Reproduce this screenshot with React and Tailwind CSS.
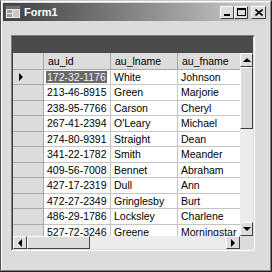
import React from "react";

const rows = [
  ["172-32-1176", "White", "Johnson"],
  ["213-46-8915", "Green", "Marjorie"],
  ["238-95-7766", "Carson", "Cheryl"],
  ["267-41-2394", "O'Leary", "Michael"],
  ["274-80-9391", "Straight", "Dean"],
  ["341-22-1782", "Smith", "Meander"],
  ["409-56-7008", "Bennet", "Abraham"],
  ["427-17-2319", "Dull", "Ann"],
  ["472-27-2349", "Gringlesby", "Burt"],
  ["486-29-1786", "Locksley", "Charlene"],
  ["527-72-3246", "Greene", "Morningstar"],
];

function Bevel({ className = "", children }) {
  return (
    <div
      className={
        "bg-[#dcdcdc] border border-t-white border-l-white border-r-[#404040] border-b-[#404040] flex items-center justify-center " +
        className
      }
    >
      {children}
    </div>
  );
}

function Arrow({ dir }) {
  const pts = {
    up: "0,4 4,0 8,4",
    down: "0,0 8,0 4,4",
    left: "4,0 4,8 0,4",
    right: "0,0 0,8 4,4",
  }[dir];
  const vert = dir === "up" || dir === "down";
  return (
    <svg width={vert ? 8 : 4} height={vert ? 4 : 8} viewBox={vert ? "0 0 8 4" : "0 0 4 8"}>
      <polygon points={pts} fill="#000" />
    </svg>
  );
}

function FormIcon() {
  return (
    <svg width="16" height="16" viewBox="0 0 16 16">
      <rect x="0.5" y="1.5" width="15" height="13" fill="#e8e8e8" stroke="#505050" />
      <rect x="1" y="2" width="14" height="3" fill="#707070" />
      <rect x="2" y="6" width="5" height="3" fill="#a0a0a0" />
      <rect x="2" y="10" width="5" height="3" fill="#a0a0a0" />
      <rect x="8" y="6" width="6" height="7" fill="#c8c8c8" />
    </svg>
  );
}

export default function App() {
  return (
    <div
      className="w-[272px] h-[272px] bg-[#dcdcdc] border border-t-[#c8c8c8] border-l-[#505050] border-r-[#202020] border-b-[#202020]"
      style={{ fontFamily: '"Liberation Sans", Arial, sans-serif' }}
    >
      <div className="h-full border border-t-white border-l-white border-r-[#808080] border-b-[#808080] p-[1px] flex flex-col">
        {/* title bar */}
        <div className="h-[18px] flex items-center bg-gradient-to-r from-[#404040] to-[#d4d4d4] pl-[2px] pr-[3px]">
          <FormIcon />
          <span className="ml-[3px] text-[11px] font-bold text-white leading-none">Form1</span>
          <div className="ml-auto flex items-center">
            <Bevel className="w-[14px] h-[13px]">
              <div className="w-[6px] h-[2px] bg-black mt-[6px] -ml-[1px]" />
            </Bevel>
            <Bevel className="w-[14px] h-[13px]">
              <div className="w-[9px] h-[8px] border border-black border-t-2" />
            </Bevel>
            <Bevel className="w-[15px] h-[13px] ml-[3px]">
              <svg width="8" height="7" viewBox="0 0 8 7">
                <path d="M0.5 0.5 L7.5 6.5 M7.5 0.5 L0.5 6.5" stroke="#000" strokeWidth="1.6" />
              </svg>
            </Bevel>
          </div>
        </div>

        {/* client area */}
        <div className="flex-1 pl-[8px] pt-[14px]">
          <div className="w-[244px] h-[216px] border border-t-[#808080] border-l-[#808080] border-r-white border-b-white">
            <div className="h-full border border-t-[#404040] border-l-[#404040] border-r-[#dcdcdc] border-b-[#dcdcdc] flex flex-col bg-[#dcdcdc]">
              <div className="h-[16px] bg-[#4b4b4b]" />
              <div className="flex-1 flex min-h-0">
                <div className="flex-1 overflow-hidden text-[10.5px] text-black leading-none">
                  <div className="flex h-[17px] w-[300px]">
                    <div className="w-[31px] border-r border-b border-[#a8a8a8] bg-[#dcdcdc]" />
                    {["au_id", "au_lname", "au_fname"].map((h) => (
                      <div
                        key={h}
                        className="w-[67px] shrink-0 border-r border-b border-[#a8a8a8] bg-[#dcdcdc] flex items-center pl-[4px]"
                      >
                        {h}
                      </div>
                    ))}
                  </div>
                  {rows.map((r, i) => (
                    <div key={r[0]} className={"flex w-[300px] " + (i % 2 ? "h-[16px]" : "h-[15px]")}>
                      <div className="w-[31px] shrink-0 border-r border-b border-[#a8a8a8] bg-[#dcdcdc] flex items-center pl-[6px]">
                        {i === 0 && <Arrow dir="right" />}
                      </div>
                      {r.map((c, j) => (
                        <div
                          key={j}
                          className="w-[67px] shrink-0 border-r border-b border-[#c4c4c4] bg-white flex items-center pl-[2px] whitespace-nowrap overflow-hidden"
                        >
                          {i === 0 && j === 0 ? (
                            <span className="bg-[#6a6a6a] text-[#f0f0f0] px-[1px] py-[1px]">{c}</span>
                          ) : (
                            <span className="pl-[1px]">{c}</span>
                          )}
                        </div>
                      ))}
                    </div>
                  ))}
                </div>
                {/* vertical scrollbar */}
                <div className="w-[13px] flex flex-col bg-[#ececec]">
                  <Bevel className="h-[14px]">
                    <Arrow dir="up" />
                  </Bevel>
                  <Bevel className="h-[62px]" />
                  <div className="flex-1" />
                  <Bevel className="h-[14px]">
                    <Arrow dir="down" />
                  </Bevel>
                </div>
              </div>
              {/* horizontal scrollbar */}
              <div className="h-[13px] flex">
                <div className="flex-1 flex bg-[#ececec]">
                  <Bevel className="w-[14px]">
                    <Arrow dir="left" />
                  </Bevel>
                  <Bevel className="w-[63px]" />
                  <div className="flex-1" />
                  <Bevel className="w-[14px]">
                    <Arrow dir="right" />
                  </Bevel>
                </div>
                <div className="w-[13px] bg-[#dcdcdc]" />
              </div>
            </div>
          </div>
        </div>
      </div>
    </div>
  );
}
